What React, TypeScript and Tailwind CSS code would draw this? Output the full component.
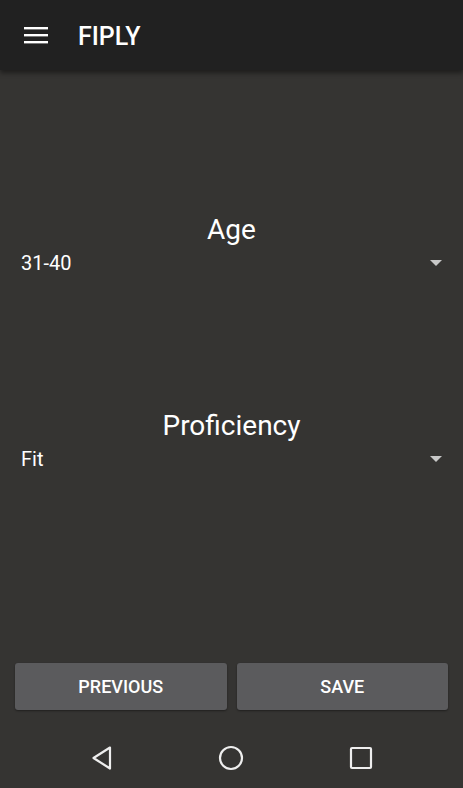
import React from 'react';

const Caret: React.FC = () => (
  <svg width="12" height="6" viewBox="0 0 12 6" className="mr-[21px]">
    <path d="M0 0h12L6 6z" fill="#c8c8c8" />
  </svg>
);

const Field: React.FC<{ label: string; value: string }> = ({ label, value }) => (
  <div className="flex flex-col">
    <div className="text-center text-[28px] leading-[32px] text-white">{label}</div>
    <div className="mt-[5px] flex h-[24px] items-center justify-between">
      <span className="pl-[21px] text-[20px] leading-[24px] text-white">{value}</span>
      <Caret />
    </div>
  </div>
);

export default function App() {
  return (
    <div
      className="flex h-[788px] w-[463px] flex-col bg-[#353432]"
      style={{ fontFamily: 'Roboto, "Noto Sans", sans-serif' }}
    >
      <header className="relative z-10 flex h-[70px] items-center bg-[#212121] shadow-[0_3px_5px_rgba(0,0,0,0.45)]">
        <svg width="24" height="18" viewBox="0 0 24 18" className="ml-[24px]">
          <rect x="0" y="1" width="24" height="2.4" fill="#fff" />
          <rect x="0" y="8" width="24" height="2.4" fill="#fff" />
          <rect x="0" y="15" width="24" height="2.4" fill="#fff" />
        </svg>
        <span className="ml-[30px] pt-[3px] text-[25px] font-medium text-white">FIPLY</span>
      </header>

      <main className="flex flex-1 flex-col pt-[144px]">
        <Field label="Age" value="31-40" />
        <div className="h-[135px]" />
        <Field label="Proficiency" value="Fit" />
      </main>

      <div className="flex gap-[10px] px-[15px]">
        <button className="h-[47px] flex-1 rounded-[3px] bg-[#5b5b5d] text-[18px] font-medium text-white shadow-[0_1px_2px_rgba(0,0,0,0.4)]">
          PREVIOUS
        </button>
        <button className="h-[47px] flex-1 rounded-[3px] bg-[#5b5b5d] text-[18px] font-medium text-white shadow-[0_1px_2px_rgba(0,0,0,0.4)]">
          SAVE
        </button>
      </div>

      <nav className="mt-[20px] flex h-[58px] items-center justify-around px-[38px]">
        <svg width="24" height="26" viewBox="0 0 24 26" className="mb-[2px]">
          <path d="M20 2.5L3.5 13 20 23.5z" fill="none" stroke="#eee" strokeWidth="2.2" strokeLinejoin="round" />
        </svg>
        <svg width="26" height="26" viewBox="0 0 26 26" className="mb-[2px]">
          <circle cx="13" cy="13" r="11" fill="none" stroke="#eee" strokeWidth="2.2" />
        </svg>
        <svg width="24" height="24" viewBox="0 0 24 24" className="mb-[2px]">
          <rect x="2" y="2" width="20" height="20" rx="1" fill="none" stroke="#eee" strokeWidth="2.2" />
        </svg>
      </nav>
    </div>
  );
}
